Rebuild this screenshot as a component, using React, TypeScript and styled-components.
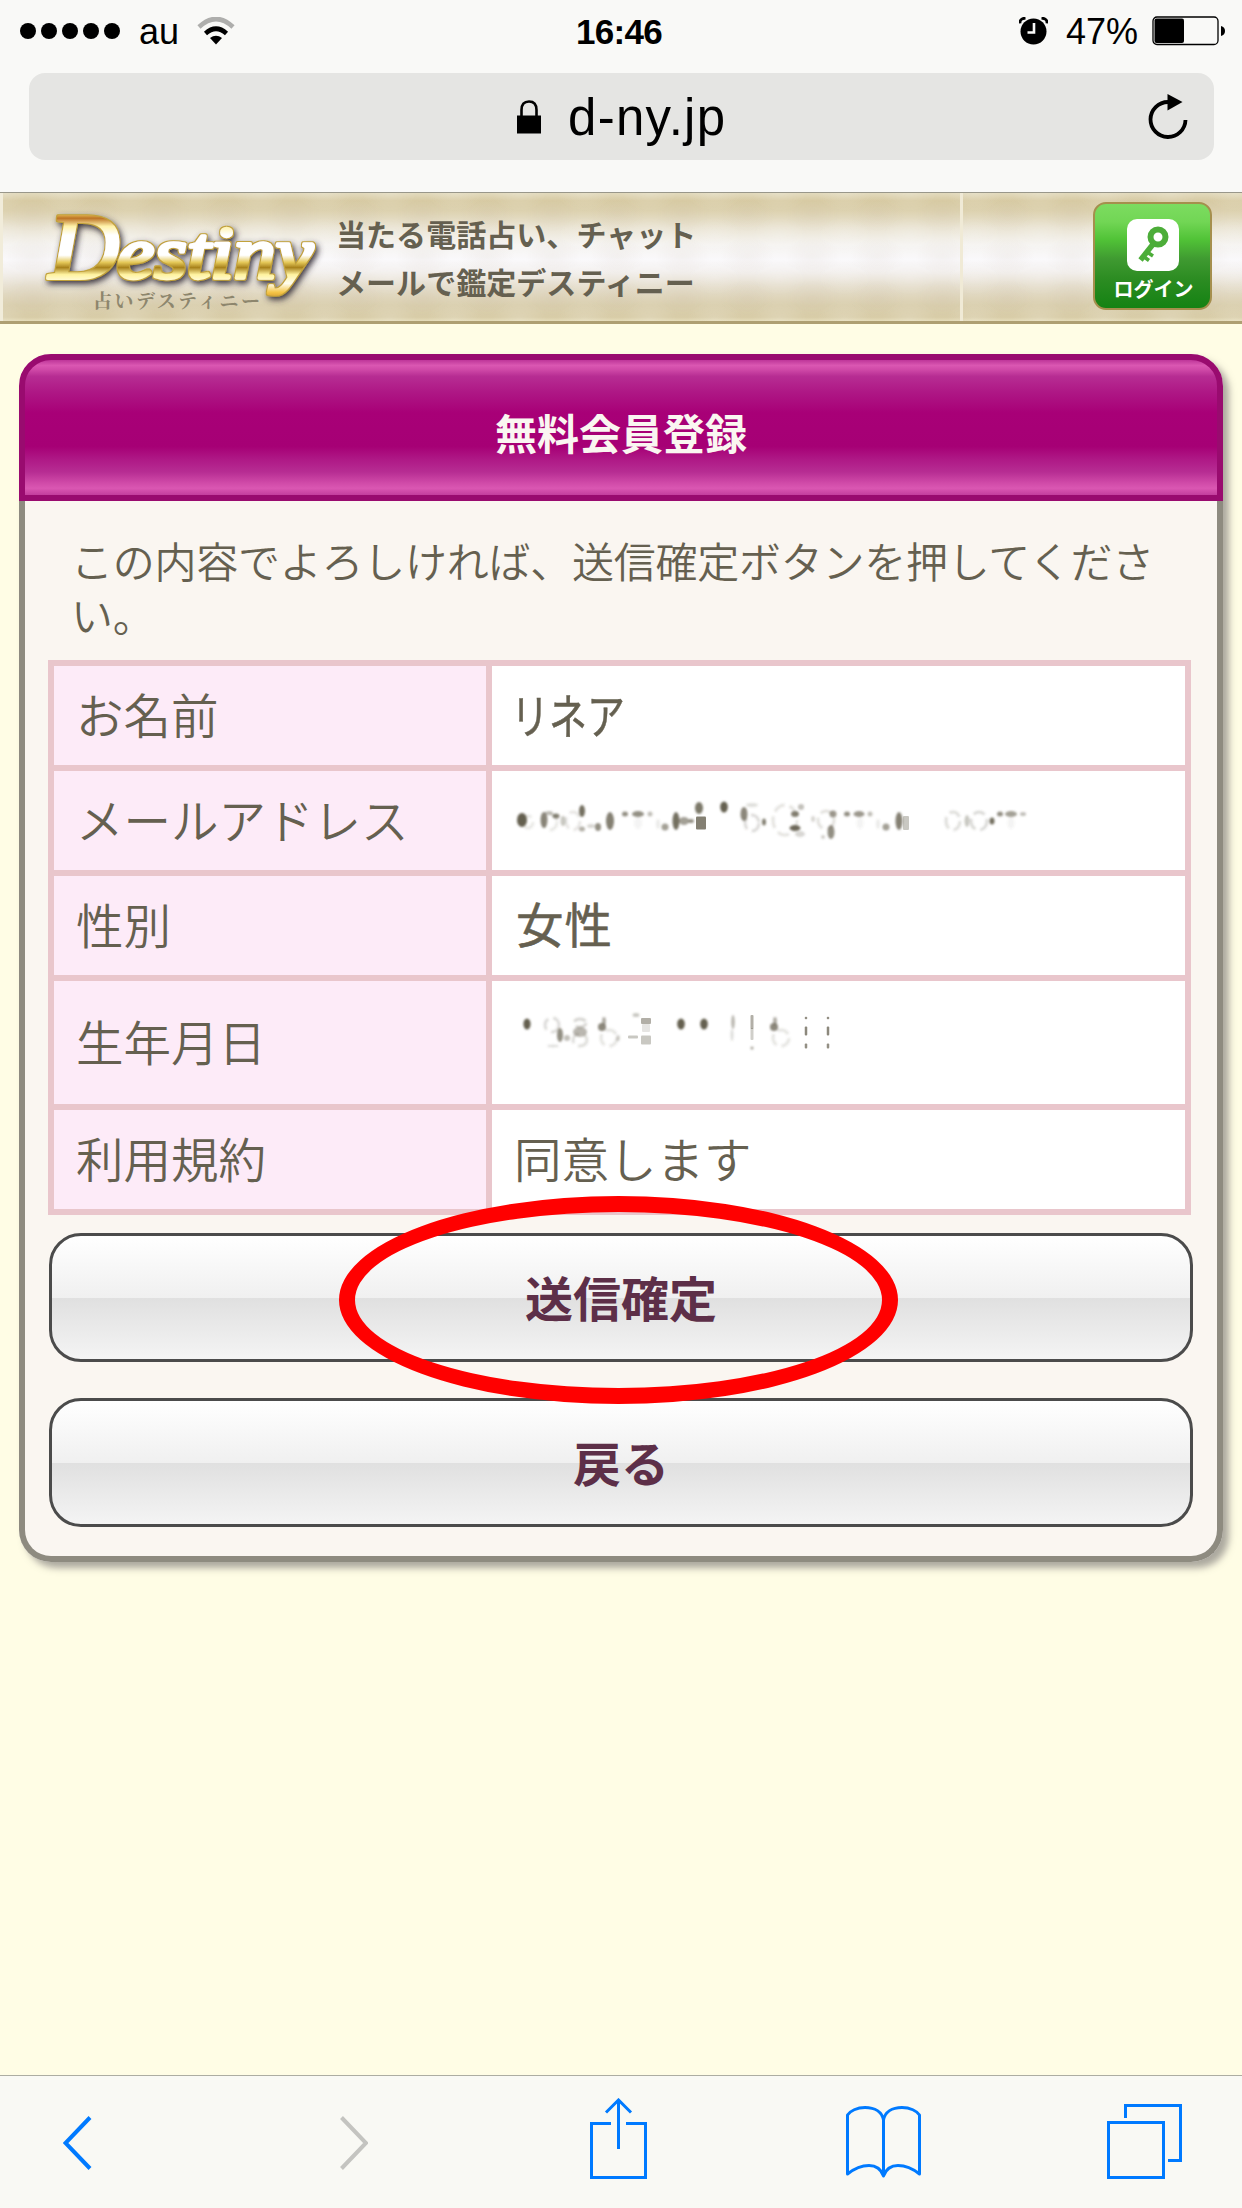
import React from "react";
import styled, { createGlobalStyle } from "styled-components";

const jp = `"Liberation Sans", "Noto Sans CJK JP", sans-serif`;
const cjk = `"Noto Sans CJK JP", sans-serif`;
const ink = "#656050";
const blue = "#007aff";

const GlobalStyle = createGlobalStyle`
  * { box-sizing: border-box; }
  body { margin: 0; background: #fffde5; font-family: ${jp}; }
  h1, p { margin: 0; }
`;

const Screen = styled.div`
  width: 1242px;
  height: 2208px;
  display: flex;
  flex-direction: column;
  overflow: hidden;
  background: #fffde5;
`;

const BrowserTop = styled.div`
  height: 192px;
  flex: none;
  background: #f9f9f7;
`;

const StatusBar = styled.div`
  height: 73px;
  padding: 0 16px 12px 20px;
  display: grid;
  grid-template-columns: 1fr auto 1fr;
  align-items: center;
  font-size: 36px;
  line-height: 60px;
  color: #000;
`;

const StatusGroup = styled.div<{ $end?: boolean }>`
  display: flex;
  align-items: center;
  justify-content: ${(p) => (p.$end ? "flex-end" : "flex-start")};
`;

const Dots = styled.div`
  display: flex;
  gap: 5px;
  margin-right: 19px;
`;

const Dot = styled.i`
  width: 16px;
  height: 16px;
  border-radius: 50%;
  background: #000;
`;

const StatusText = styled.span<{ $ml?: number; $mr?: number }>`
  margin-left: ${(p) => p.$ml ?? 0}px;
  margin-right: ${(p) => p.$mr ?? 0}px;
  padding-top: 2px;
`;

const Clock = styled.strong`
  padding: 2px 8px 0 0;
  font-size: 35px;
  letter-spacing: -0.7px;
`;

const AddressBar = styled.div`
  height: 87px;
  margin: 0 28px 0 29px;
  padding: 0 26px 0 488px;
  display: flex;
  align-items: center;
  border-radius: 16px;
  background: #e5e5e3;
`;

const Host = styled.span`
  flex: 1;
  margin-left: 27px;
  padding-top: 2px;
  font-size: 51px;
  letter-spacing: 1.3px;
  line-height: 80px;
  color: #000;
`;

const SiteHeader = styled.header`
  height: 132px;
  flex: none;
  display: flex;
  align-items: flex-start;
  border-top: 1px solid #99978a;
  border-bottom: 3px solid #ae9f72;
  background:
    linear-gradient(90deg, #f1ecda 0 3px, transparent 3px 960px, #f0ead6 960px 963px, transparent 963px),
    radial-gradient(ellipse at 50% 50%, rgba(180, 160, 140, 0.09), rgba(180, 160, 140, 0) 60%) 0 0 / 65px 42px,
    radial-gradient(ellipse at 50% 50%, rgba(255, 255, 255, 0.16), rgba(255, 255, 255, 0) 60%) 32px 21px / 65px 42px,
    linear-gradient(180deg, #e2dabd 0, #d8cba4 6%, #ddd2b0 14%, #eae4d3 27%, #f5f3f0 40%, #faf9fb 52%, #f3f0ee 61%, #e6dfcf 72%, #dacfae 88%, #d8cca7 97%, #e5dcb9 100%);
`;

const LogoSvg = styled.svg`
  width: 336px;
  height: 128px;
  flex: none;
`;

const Tagline = styled.p`
  flex: 1;
  padding-top: 16px;
  font: bold 30px/48px ${cjk};
  letter-spacing: 0.05px;
  color: ${ink};
`;

const LoginButton = styled.button`
  width: 119px;
  height: 108px;
  margin: 9px 30px 0 0;
  padding: 15px 0 0;
  display: flex;
  flex-direction: column;
  align-items: center;
  border: 2px solid #a58f4d;
  border-radius: 13px;
  background: linear-gradient(180deg, #7cdc60 0, #72d655 17%, #51c337 34%, #3f9a31 53%, #2c8c22 72%, #148213 100%);
`;

const LoginLabel = styled.span`
  margin: 5px 0 0 2px;
  font: bold 20px/26px ${cjk};
  color: #fff;
`;

const Card = styled.main`
  width: 1204px;
  height: 1208px;
  flex: none;
  margin: 30px 0 0 19px;
  border-radius: 32px;
  background: #faf6f1;
  box-shadow: 6px 6px 7px rgba(90, 85, 90, 0.5);
`;

const CardTitle = styled.h1`
  height: 147px;
  display: flex;
  align-items: center;
  justify-content: center;
  padding-top: 8px;
  border: 6px solid #990b6f;
  border-radius: 32px 32px 0 0;
  background: linear-gradient(180deg, #be3699 0, #da57b2 4%, #d04aa8 7%, #b72d93 12%, #ae1785 24%, #a80077 39%, #a60075 64%, #ae1785 73%, #b72d93 83%, #d04aa8 91%, #da57b2 95%, #c33e9d 100%);
  color: #faf6f1;
  font: bold 42px/60px ${cjk};
`;

const CardBody = styled.div`
  height: 1061px;
  padding: 32px 23px 0 23px;
  border: 6px solid #8e8b80;
  border-top: 0;
  border-radius: 0 0 32px 32px;
`;

const Intro = styled.p`
  margin: 0 -10px 19px 23px;
  font: 350 42px/54px ${cjk};
  letter-spacing: -0.25px;
  color: ${ink};
`;

const Table = styled.dl`
  width: 1143px;
  margin: 0 0 18px;
  padding: 6px;
  display: grid;
  gap: 6px;
  background: #e9c6cc;
`;

const Row = styled.div<{ $tall?: boolean }>`
  height: ${(p) => (p.$tall ? 123 : 99)}px;
  display: grid;
  grid-template-columns: 432px 1fr;
  grid-template-rows: 100%;
  gap: 6px;
`;

const Label = styled.dt`
  padding: 0 0 3px 22px;
  display: flex;
  align-items: center;
  background: #fdebf8;
  color: ${ink};
  font: 350 47.5px/70px ${cjk};
`;

const Value = styled.dd`
  margin: 0;
  padding: 0 0 3px 22px;
  display: flex;
  align-items: center;
  background: #fff;
  color: ${ink};
  font: 350 47.5px/70px ${cjk};
`;

const Narrow = styled.span`
  display: inline-block;
  transform: scaleX(0.8);
  transform-origin: 0 50%;
  font-weight: 400;
  -webkit-text-stroke: 0.5px ${ink};
  margin-left: -3px;
`;

const Medium = styled.span`
  margin-left: 2px;
  padding-bottom: 2px;
  font-weight: 400;
  -webkit-text-stroke: 0.5px ${ink};
  letter-spacing: 1px;
`;

const ErasedSvg = styled.svg`
  height: 96px;
  width: 640px;
  align-self: flex-start;
  margin-left: -22px;
`;

const ButtonSlot = styled.div<{ $front?: boolean }>`
  position: relative;
  z-index: ${(p) => (p.$front ? 1 : 0)};
  width: 1144px;
  height: 129px;
  margin: 0 0 36px 1px;
`;

const GlossButton = styled.button`
  width: 100%;
  height: 100%;
  padding: 0 0 4px;
  border: 3px solid #4b4b4b;
  border-radius: 32px;
  background: linear-gradient(180deg, #fff 0, #f0f0f0 50%, #e0e0e0 50.5%, #f4f4f4 100%);
  color: #5d2f48;
  font: bold 48px/70px ${cjk};
`;

const Circled = styled.i`
  position: absolute;
  left: 290px;
  top: -37px;
  width: 559px;
  height: 208px;
  border: 16px solid #ff0000;
  border-radius: 50%;
  pointer-events: none;
`;

const Toolbar = styled.nav`
  height: 133px;
  flex: none;
  margin-top: auto;
  padding: 22px 0 0 63px;
  display: grid;
  grid-template-columns: 276px 251px 256px 261px 75px;
  border-top: 1px solid #adada2;
  background: #f9f9f4;
`;

const ToolIcon = styled.svg`
  height: 82px;
  fill: none;
  stroke: ${blue};
  stroke-width: 3;
`;

type Blob = [number, number, number, number, number];

const mailBlobs: Blob[] = [
  [522, 820, 5, 7, 1], [544, 820, 3.5, 8, 0.75], [549, 813, 4, 2, 0.4], [556, 816, 3.5, 2.5, 0.8], [563, 821, 2.5, 5, 0.35],
  [582, 811, 3, 6, 0.9], [582, 829, 3, 2.5, 0.5], [598, 827, 3, 4, 0.7], [610, 821, 4, 9, 0.8],
  [625, 814, 3, 2.5, 0.7], [638, 814, 6, 3, 0.7], [650, 814, 2.5, 2.5, 0.4], [638, 823, 4, 6, 0.07],
  [665, 827, 3.5, 3.5, 0.6], [676, 821, 3.5, 9, 0.9], [684, 821, 5, 4, 0.6], [691, 821, 3, 2, 0.7], [699, 808, 4, 6, 0.85],
  [724, 807, 3.8, 5.5, 1], [744, 814, 3.5, 7, 0.75], [752, 805, 6, 2, 0.2], [764, 822, 2, 3.5, 0.8],
  [795, 814, 4, 3, 0.8], [795, 828, 5.5, 3, 0.95], [801, 807, 3, 3, 0.4], [800, 834, 5, 3, 0.25], [813, 819, 2, 3, 0.25],
  [833, 814, 3.5, 3.5, 0.65], [831, 832, 3.5, 7, 0.7], [823, 837, 2, 2, 0.3], [847, 814, 3, 2.5, 0.7], [859, 814, 5.5, 3, 0.65],
  [870, 814, 2.5, 2.5, 0.4], [860, 823, 3.5, 6, 0.07], [886, 827, 3.5, 3.5, 0.6], [899, 821, 3.5, 9, 0.8],
  [967, 821, 2.5, 6, 0.35], [992, 821, 2.5, 3.5, 0.9], [1000, 814, 3, 2.5, 0.7], [1011, 814, 6, 3, 0.6], [1023, 814, 3, 2, 0.4],
  [1011, 823, 3.5, 6, 0.07], [878, 824, 2, 5, 0.12], [658, 824, 2, 5, 0.12], [591, 826, 4, 2, 0.25],
];
const mailRings: Blob[] = [
  [573, 821, 7, 9, 0.15], [752, 823, 7, 8, 0.22], [785, 820, 12, 15, 0.17], [826, 820, 8, 9, 0.18],
  [953, 821, 7, 9, 0.2], [979, 821, 8, 9, 0.23], [550, 822, 7, 8, 0.14], [528, 822, 5, 6, 0.14],
];
const mailBars: Blob[] = [[701, 823, 10, 13, 0.8], [906, 823, 6, 14, 0.35]];

const dateBlobs: Blob[] = [
  [527, 1024, 3.6, 5.5, 1], [560, 1035, 3, 7, 0.7], [567, 1038, 3, 3, 0.4], [553, 1046, 6, 1.5, 0.2],
  [580, 1032, 7, 5, 0.45], [604, 1021, 2, 4, 0.5], [602, 1027, 4, 4, 0.75], [618, 1038, 2, 3, 0.3], [636, 1015, 3.5, 2, 0.35],
  [681, 1024, 3.8, 5.5, 1], [704, 1024, 3.8, 5.5, 1], [733, 1022, 1.8, 7, 0.45], [732, 1035, 1.6, 6, 0.2],
  [775, 1021, 2, 4, 0.5], [774, 1027, 4, 4, 0.75], [752, 1048, 1.5, 1.5, 0.6],
];
const dateRings: Blob[] = [
  [552, 1025, 7, 7, 0.22], [580, 1023, 6, 4, 0.25], [580, 1040, 7, 6, 0.2], [609, 1038, 8, 8, 0.16], [781, 1038, 8, 8, 0.16],
];
const dateBars: Blob[] = [
  [633, 1037, 10, 3, 0.35], [646, 1021, 10, 6, 0.5], [646, 1028, 8, 8, 0.16], [646, 1040, 10, 9, 0.35],
  [752, 1022, 3, 14, 0.5], [752, 1034, 3, 12, 0.3],
  [806, 1018, 2.5, 2.5, 0.7], [806, 1031, 2.5, 9, 0.75], [806, 1046, 2.5, 5, 0.7],
  [828, 1018, 2.5, 2.5, 0.7], [828, 1031, 2.5, 9, 0.75], [828, 1046, 2.5, 5, 0.7],
];

function Erased({ top, blobs, rings, bars }: { top: number; blobs: Blob[]; rings: Blob[]; bars: Blob[] }) {
  const id = `soft${top}`;
  return (
    <ErasedSvg viewBox={`492 ${top} 640 96`} aria-hidden="true">
      <filter id={id} x="-5%" y="-20%" width="110%" height="140%">
        <feGaussianBlur stdDeviation="0.9" />
      </filter>
      <g filter={`url(#${id})`} fill={ink}>
        {blobs.map(([x, y, rx, ry, o], i) => (
          <ellipse key={i} cx={x} cy={y} rx={rx} ry={ry} opacity={o} />
        ))}
        {rings.map(([x, y, rx, ry, o], i) => (
          <ellipse key={i} cx={x} cy={y} rx={rx} ry={ry} fill="none" stroke={ink} strokeWidth="3" strokeDasharray="12 5" opacity={o} />
        ))}
      </g>
      {bars.map(([x, y, w, h, o], i) => (
        <rect key={i} x={x - w / 2} y={y - h / 2} width={w} height={h} rx="1" fill={ink} opacity={o} />
      ))}
    </ErasedSvg>
  );
}

function Logo() {
  return (
    <LogoSvg viewBox="0 193 336 128">
      <defs>
        <linearGradient id="gold" gradientUnits="userSpaceOnUse" x1="0" y1="213" x2="0" y2="301">
          <stop offset="0" stopColor="#f1cf62" />
          <stop offset="0.06" stopColor="#bd7426" />
          <stop offset="0.15" stopColor="#fff2a8" />
          <stop offset="0.25" stopColor="#ffffff" />
          <stop offset="0.48" stopColor="#ffffff" />
          <stop offset="0.56" stopColor="#e5c95a" />
          <stop offset="0.62" stopColor="#a8821c" />
          <stop offset="0.7" stopColor="#fff3a0" />
          <stop offset="0.8" stopColor="#fffef0" />
          <stop offset="0.9" stopColor="#f5c648" />
          <stop offset="1" stopColor="#c58222" />
        </linearGradient>
        <filter id="logoShadow" x="-10%" y="-20%" width="120%" height="150%">
          <feMorphology in="SourceAlpha" operator="dilate" radius="0.6" result="edge" />
          <feFlood floodColor="#c2a23a" />
          <feComposite in2="edge" operator="in" result="rim" />
          <feDropShadow in="rim" dx="2" dy="3" stdDeviation="3.2" floodColor="#38313a" floodOpacity="1" result="shade" />
          <feMerge>
            <feMergeNode in="shade" />
            <feMergeNode in="SourceGraphic" />
          </feMerge>
        </filter>
      </defs>
      <g filter="url(#logoShadow)" fill="url(#gold)" stroke="url(#gold)" strokeWidth="3.6" strokeLinejoin="round" strokeLinecap="round" fontFamily="Liberation Serif, serif" fontStyle="italic">
        <text x="49" y="278" fontSize="94" textLength="70" lengthAdjust="spacingAndGlyphs">D</text>
        <text x="117" y="278" fontSize="75" textLength="196" lengthAdjust="spacingAndGlyphs">estiny</text>
      </g>
      <text x="93" y="308" fontFamily="Noto Serif CJK JP, Noto Sans CJK JP, serif" fontSize="19" fontWeight="bold" textLength="167" fill="#8d866d">占いデスティニー</text>
    </LogoSvg>
  );
}

export default function App() {
  return (
    <Screen>
      <GlobalStyle />
      <BrowserTop>
        <StatusBar>
          <StatusGroup>
            <Dots>
              {[0, 1, 2, 3, 4].map((n) => (
                <Dot key={n} />
              ))}
            </Dots>
            <StatusText $mr={18}>au</StatusText>
            <svg width="38" height="28" viewBox="0 0 38 28" fill="none">
              <path d="M2 10Q19-6 36 10" stroke="#aeaeac" strokeWidth="4.6" />
              <path d="M8.5 16.5Q19 7 29.5 16.5" stroke="#000" strokeWidth="4.6" />
              <path d="M13 21Q19 16.5 25 21L19 27.5Z" fill="#000" />
            </svg>
          </StatusGroup>
          <Clock>16:46</Clock>
          <StatusGroup $end>
            <svg width="29" height="28" viewBox="0 0 29 28">
              <circle cx="14.5" cy="14.5" r="13" />
              <path d="M1 6.5Q.5 1.5 6.5 1M28 6.5Q28.5 1.5 22.5 1" fill="none" stroke="#000" strokeWidth="2.8" />
              <path d="M15 6V15.5H8.5" fill="none" stroke="#f9f9f7" strokeWidth="2.6" />
            </svg>
            <StatusText $ml={18} $mr={14}>47%</StatusText>
            <svg width="74" height="30" viewBox="0 0 74 30">
              <rect x="1" y="1" width="65" height="27.5" rx="4" fill="none" stroke="#000" strokeWidth="1.3" />
              <rect x="2.5" y="2.5" width="29.5" height="24.5" rx="2" />
              <path d="M69 10Q73 11 73 15T69 20Z" />
            </svg>
          </StatusGroup>
        </StatusBar>
        <AddressBar>
          <svg width="24" height="34" viewBox="0 0 24 34">
            <path d="M4.5 17V10Q4.5 1.5 12 1.5T19.5 10V17" fill="none" stroke="#000" strokeWidth="2.6" />
            <path d="M0 15.5H24V33.5H0Z" />
          </svg>
          <Host>d-ny.jp</Host>
          <svg width="40" height="46" viewBox="0 0 40 46">
            <path d="M37.5 26A17.5 17.5 0 1 1 20 8" fill="none" stroke="#000" strokeWidth="3.8" />
            <path d="M19.5 0L34.5 8L19.5 16.5Z" />
          </svg>
        </AddressBar>
      </BrowserTop>

      <SiteHeader>
        <Logo />
        <Tagline>
          当たる電話占い、チャット
          <br />
          メールで鑑定デスティニー
        </Tagline>
        <LoginButton>
          <svg width="52" height="52" viewBox="0 0 52 52">
            <rect width="52" height="52" rx="10" fill="#fff" />
            <circle cx="31" cy="18" r="7.5" fill="none" stroke="#4cad39" strokeWidth="6" />
            <path d="M27 24L13.5 41" stroke="#4cad39" strokeWidth="5.5" />
            <path d="M20 33L26 37M16.5 37.5L22 41.5" stroke="#4cad39" strokeWidth="3.5" />
          </svg>
          <LoginLabel>ログイン</LoginLabel>
        </LoginButton>
      </SiteHeader>

      <Card>
        <CardTitle>無料会員登録</CardTitle>
        <CardBody>
          <Intro>この内容でよろしければ、送信確定ボタンを押してください。</Intro>
          <Table>
            <Row>
              <Label>お名前</Label>
              <Value>
                <Narrow>リネア</Narrow>
              </Value>
            </Row>
            <Row>
              <Label>メールアドレス</Label>
              <Value>
                <Erased top={771} blobs={mailBlobs} rings={mailRings} bars={mailBars} />
              </Value>
            </Row>
            <Row>
              <Label>性別</Label>
              <Value>
                <Medium>女性</Medium>
              </Value>
            </Row>
            <Row $tall>
              <Label>生年月日</Label>
              <Value>
                <Erased top={981} blobs={dateBlobs} rings={dateRings} bars={dateBars} />
              </Value>
            </Row>
            <Row>
              <Label>利用規約</Label>
              <Value>同意します</Value>
            </Row>
          </Table>
          <ButtonSlot $front>
            <GlossButton>送信確定</GlossButton>
            <Circled />
          </ButtonSlot>
          <ButtonSlot>
            <GlossButton>戻る</GlossButton>
          </ButtonSlot>
        </CardBody>
      </Card>

      <Toolbar>
        <ToolIcon width="29" viewBox="0 2098 29 82">
          <path d="M27 2117.5L2.5 2143L27 2168.5" strokeWidth="4" />
        </ToolIcon>
        <ToolIcon width="29" viewBox="0 2098 29 82">
          <path d="M2.5 2117.5L27 2143L2.5 2168.5" stroke="#c4c4c0" strokeWidth="4" />
        </ToolIcon>
        <ToolIcon width="57" viewBox="590 2098 57 82">
          <path d="M611 2123.5H591.5V2177.5H645.5V2123.5H626M618.5 2149V2100M606 2112.5L618.5 2100L631 2112.5" />
        </ToolIcon>
        <ToolIcon width="76" viewBox="846 2098 76 82">
          <path d="M883.5 2176V2120C882 2112 875 2107.5 865 2107.5C857 2107.5 850 2111 847.5 2115V2174C855 2168 862 2165.5 869 2165.5C877 2165.5 881 2169 883.5 2176C886 2169 890 2165.5 898 2165.5C905 2165.5 912 2168 919.5 2174V2115C917 2111 910 2107.5 902 2107.5C892 2107.5 885 2112 883.5 2120" strokeLinejoin="round" />
        </ToolIcon>
        <ToolIcon width="75" viewBox="1107 2098 75 82">
          <path d="M1108.5 2122.5H1163.5V2177.5H1108.5ZM1125.5 2118V2105.5H1180.5V2160.5H1168" />
        </ToolIcon>
      </Toolbar>
    </Screen>
  );
}
